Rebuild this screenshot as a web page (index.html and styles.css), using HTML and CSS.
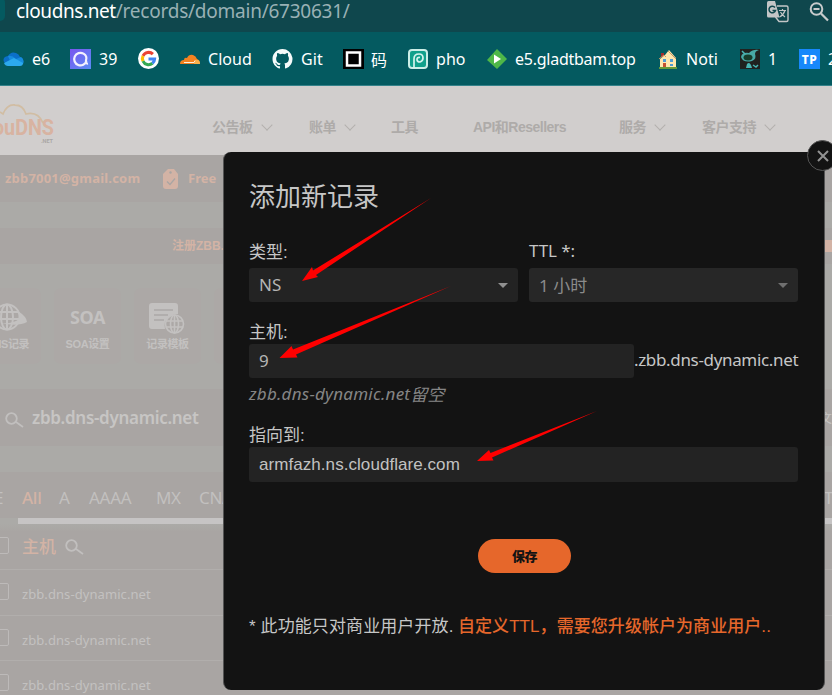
FILE: index.html
```html
<!DOCTYPE html>
<html lang="zh-CN">
<head>
<meta charset="utf-8">
<title>ClouDNS</title>
<link rel="stylesheet" href="styles.css">
</head>
<body>
<div class="screen">
  <div class="address">
    <span class="tab-edge"></span>
    <div class="url"><b>cloudns.net</b>/records/domain/6730631/</div>
    <svg class="translate" width="22" height="22" viewBox="0 0 22 22"><path d="M10 5h9.5q1.500 0 1.500 1.500V19q0 1.500-1.500 1.500H12L8.500 16" fill="none" stroke="#c3c6c7" stroke-width="1.400"/><path d="M1.500 0H8l4.500 16.500H1.500Q0 16.500 0 15V1.500Q0 0 1.500 0z" fill="#c3c6c7"/><path d="M8 6.500A3.300 3.300 0 1 0 8.500 9.500H5.500" fill="none" stroke="#0f474d" stroke-width="1.500"/><path d="M12 9.500h7M15.500 8v1.500M18 9.500Q16.500 14 12.500 16M13.500 11q1.500 3 4.500 5" fill="none" stroke="#c3c6c7" stroke-width="1.200"/></svg>
    <svg class="zoomout" width="22" height="22" viewBox="0 0 22 22"><circle cx="7.500" cy="8" r="5.800" fill="none" stroke="#c7cbcc" stroke-width="2"/><path d="M4.500 8h6M12 12.500l7 7" stroke="#c7cbcc" stroke-width="2.200" fill="none"/></svg>
  </div>
  <div class="bookmarks">
    <div class="bm"><svg width="21" height="20" viewBox="0 0 21 20"><path d="M1 13Q-1 8 5 7Q8 2 13 4Q16 5 17 8Q21 9 20 13L15 16H5z" fill="#0b6fc8"/><path d="M5 7q4-1 8 3l5-2q4 3 2 7L8 14z" fill="#168bdd"/><path d="M1 14l10-5q2 1 9 5 0 3-3 3H5q-3 0-4-3z" fill="#2ca9ee"/></svg>e6</div>
    <div class="bm"><svg width="21" height="20" viewBox="0 0 21 20"><defs><linearGradient id="v" x2="1" y2="1"><stop stop-color="#7a55ef"/><stop offset="1" stop-color="#5a8df5"/></linearGradient></defs><rect width="21" height="20" fill="url(#v)"/><path d="M16.500 12A6.300 6.300 0 1 1 13.500 4.600Q17.500 7 16 11.500q-.5 3.500 2 3" fill="none" stroke="#f3f1ff" stroke-width="2.200"/></svg>39</div>
    <div class="bm"><svg width="21" height="21" viewBox="0 0 48 48"><circle cx="24" cy="24" r="24" fill="#fff"/><g fill="none" stroke-width="7"><path d="M34 14A14 14 0 0 0 11.500 18" stroke="#ea4335"/><path d="M11.500 18A14 14 0 0 0 11.500 30" stroke="#fbbc05"/><path d="M11.500 30A14 14 0 0 0 33 35" stroke="#34a853"/><path d="M33 35A14 14 0 0 0 38 25H24" stroke="#4285f4"/></g></svg></div>
    <div class="bm"><svg width="21" height="20" viewBox="0 0 21 20"><path d="M0 15q0-4 4-4 0-3 3-2 2-4 6-3 3 1 4 4 3 1 3 5z" fill="#f58220"/><path d="M14 15l1-4q5-1 5 4z" fill="#fbb04b"/><path d="M4 13.500h10l1-2" fill="none" stroke="#fff0dc" stroke-width="1"/></svg><span class="shift">Cloud</span></div>
    <div class="bm"><svg width="21" height="20" viewBox="0 0 16 16"><path fill="#f5fafa" d="M8 0C3.580 0 0 3.580 0 8c0 3.540 2.290 6.530 5.470 7.590.4.070.55-.17.55-.38v-1.490c-2.230.49-2.700-.95-2.700-.95-.36-.93-.89-1.180-.89-1.180-.73-.5.050-.49.050-.49.810.060 1.230.83 1.230.83.720 1.230 1.880.87 2.340.67.070-.52.280-.87.510-1.070-1.780-.2-3.640-.89-3.640-3.950 0-.87.310-1.590.82-2.150-.080-.2-.36-1.020.080-2.120 0 0 .67-.21 2.200.82a7.600 7.600 0 0 1 4 0c1.530-1.040 2.200-.82 2.200-.82.440 1.100.160 1.920.080 2.120.510.560.82 1.270.82 2.150 0 3.070-1.870 3.750-3.650 3.950.29.250.54.730.54 1.480v2.190c0 .21.150.46.550.38A8 8 0 0 0 8 0z"/></svg>Git</div>
    <div class="bm"><svg width="21" height="20" viewBox="0 0 21 20"><rect width="21" height="20"/><rect x="4" y="3.500" width="13" height="13" stroke="#fff" stroke-width="2.500"/></svg><span class="shift">码</span></div>
    <div class="bm"><svg width="21" height="20" viewBox="0 0 21 20"><rect x="1" y="1" width="18" height="18" rx="3" fill="#11a08b" stroke="#cbeee7" stroke-width="2"/><path d="M6 19V10Q6 5 11 5q4 0 4 4 0 3-3 4-3 0-3-2.500Q9 8 12 8.500" fill="none" stroke="#d5f3ed" stroke-width="1.700"/></svg><span class="shift">pho</span></div>
    <div class="bm"><svg width="21" height="20" viewBox="0 0 21 20"><path d="M10 0l10 10-10 10L0 11z" fill="#4eb748"/><path d="M7 5.500l7 4.500-7 4.500z" fill="#fff"/></svg><span class="tight">e5.gladtbam.top</span></div>
    <div class="bm"><svg width="20" height="20" viewBox="0 0 20 20"><path d="M3 4h3v4H3z" fill="#a62b2b"/><path d="M2 10l5-4 4-5 7 8v10H2z" fill="#ffe7ae"/><path d="M1 10l5-4 2 2M10 2l8 8" fill="none" stroke="#c89866"/><path d="M5 10h3v3H5zM12 10h3v3h-3zM12 15h3v2h-3z" fill="#509bd2"/><path d="M5 14h3v5H5z" fill="#c35131"/><path d="M1 19h18" stroke="#65993a" stroke-width="2"/></svg>Noti</div>
    <div class="bm"><svg width="20" height="20" viewBox="0 0 20 20"><rect width="20" height="20" fill="#20221f"/><path d="M1 8Q2 3 9 4q4-4 10-3-4 1-4 4 2 5-3 7-9 2-11-4z" fill="#48a9a6"/><ellipse cx="8" cy="8.500" rx="4.500" ry="3" fill="#173d2b"/><path d="M7 15q3-3 5 4H6z" fill="#48b5b3"/><path d="M2 2l3 3M13 16l3 2 2-2" fill="none" stroke="#48b5b3" stroke-width="1.500"/></svg>1</div>
    <div class="bm"><span class="tp">TP</span>2</div>
  </div>
  <div class="site-head">
    <svg class="logo" width="58" height="44" viewBox="0 0 58 44"><path d="M0 9l3 2Q7 1 15 2q8 0 11 9 12-3 17 9" fill="none" stroke="#d1bda3" stroke-width="1.800"/><text class="logo-name" x="-7" y="32" textLength="61" lengthAdjust="spacingAndGlyphs">ouDNS</text><text class="logo-net" x="41" y="39.500" textLength="12" lengthAdjust="spacingAndGlyphs">.NET</text></svg>
    <div class="nav">
      <span>公告板<i class="chev"></i></span><span>账单<i class="chev"></i></span><span>工具</span><span>API和Resellers</span><span>服务<i class="chev"></i></span><span>客户支持<i class="chev"></i></span>
    </div>
  </div>
  <div class="account">
    <span class="mail">zbb7001@gmail.com</span>
    <svg width="16" height="20" viewBox="0 0 16 20"><path d="M5 0h6l4 5v12q0 3-3 3H3q-3 0-3-3V5z" fill="#d3b3a5"/><circle cx="7.500" cy="3.500" r="1.200" fill="#a9a5a3"/><path d="M4 12.500l3 3 5-6" fill="none" stroke="#a9a5a3" stroke-width="1.300"/></svg>
    <span class="plan">Free</span>
  </div>
  <div class="register"><span>注册ZBB.</span><i></i></div>
  <div class="tiles">
    <div class="tile"><svg width="44" height="32" viewBox="0 0 44 32"><g fill="none" stroke="#c3c1c0" stroke-width="2"><circle cx="21" cy="15" r="12.500"/><ellipse cx="21" cy="15" rx="6" ry="12.500"/><path d="M21 2v26M9 10h24M8 17h26"/></g><path d="M32 9q9 6 9 11-9 5-27 1 14 1 19-4 1-3-1-8z" fill="#c3c1c0"/></svg><span>DNS记录</span></div>
    <div class="tile"><div class="soa">SOA</div><span>SOA设置</span></div>
    <div class="tile"><svg width="36" height="32" viewBox="0 0 36 32"><path d="M3 1h23q3 0 3 3v8q-9 0-13 8-1 3 0 7H3q-3 0-3-3V4q0-3 3-3z" fill="#c3c1c0"/><path d="M5 8h19M5 13h14M5 18h10" stroke="#aca8a6" stroke-width="1.700"/><g fill="none" stroke="#c3c1c0" stroke-width="1.600"><circle cx="25.500" cy="22" r="9"/><ellipse cx="25.500" cy="22" rx="4" ry="9"/><path d="M25.500 13v18M17 19h17M17 25h17"/></g></svg><span>记录模板</span></div>
    <div class="tile"></div>
  </div>
  <div class="zone"><svg class="mag" width="19" height="16" viewBox="0 0 19 16"><circle cx="6.500" cy="6.500" r="5.300"/><path d="M11 10l7 5"/></svg><span>zbb.dns-dynamic.net</span><em>文</em></div>
  <div class="types"><span>E</span><span class="on">All</span><span>A</span><span>AAAA</span><span>MX</span><span>CNAME</span><span class="far">TL</span></div>
  <div class="slider"></div>
  <div class="list">
    <div class="line head"><i class="box"></i><b>主机</b><svg class="mag" width="19" height="16" viewBox="0 0 19 16"><circle cx="6.500" cy="6.500" r="5.300"/><path d="M11 10l7 5"/></svg></div>
    <div class="line"><i class="box"></i><span>zbb.dns-dynamic.net</span></div>
    <div class="line third"><i class="box"></i><span>zbb.dns-dynamic.net</span></div>
    <div class="line"><i class="box"></i><span>zbb.dns-dynamic.net</span></div>
  </div>

  <div class="modal">
    <h1>添加新记录</h1>
    <div class="pair">
      <div><label>类型:</label><div class="field"><span>NS</span><i class="caret"></i></div></div>
      <div><label class="lat">TTL *:</label><div class="field dim"><span>1 小时</span><i class="caret"></i></div></div>
    </div>
    <label class="host">主机:</label>
    <div class="host-row"><div class="field"><span>9</span></div><span class="suffix">.zbb.dns-dynamic.net</span></div>
    <div class="hint"><span>zbb.dns-dynamic.net</span>留空</div>
    <label class="point">指向到:</label>
    <div class="field target">armfazh.ns.cloudflare.com</div>
    <div class="save">保存</div>
    <div class="note"><span class="n1">* 此功能只对商业用户开放.</span><b>自定义TTL，需要您升级帐户为商业用户..</b></div>
  </div>
  <div class="close"><svg width="12" height="12" viewBox="0 0 12 12"><path d="M1 1l10 10M11 1L1 11" stroke="#929292" stroke-width="2"/></svg></div>
  <svg class="arrows" width="832" height="695" viewBox="0 0 832 695"><g fill="#f00"><path d="M302 281l10-14 1 3.500L431 198 316 275l2 2z"/><path d="M279.500 358l12-12 1.500 3.500L451 286 296 354.500l1.500 3z"/><path d="M477 461l12-11 1.500 3L597 411 492 457.500l1.500 3z"/></g></svg>
</div>
</body>
</html>
```
FILE: styles.css
```css
* { box-sizing: border-box; }
body { margin: 0; }
i, em { font-style: normal; }
.screen { position: relative; width: 832px; height: 695px; overflow: hidden; background: #abaaa7; font-family: "Noto Sans", "Noto Sans CJK SC", sans-serif; white-space: nowrap; display: flex; flex-direction: column; }
.screen > * { flex-shrink: 0; }
.address { height: 32px; background: #0f474d; display: flex; overflow: hidden; color: #99b1b5; }
.tab-edge { width: 5px; height: 22px; border-radius: 0 8px 12px 0; background: #045a60; margin-top: -1px; }
.url { width: 762px; padding-left: 11px; font-size: 19px; line-height: 22px; letter-spacing: -.24px; }
.url b { font-weight: 400; color: #fff; letter-spacing: -.4px; }
.translate { margin-top: 1px; }
.zoomout { margin-left: 20px; margin-top: 1px; }
.bookmarks { height: 54px; background: #045a60; border-bottom: 1px solid #34828a; padding-left: 3px; display: grid; grid-template-columns: 67px 68px 42px 92px 71px 65px 79px 171px 82px 59px 50px; color: #fff; font-size: 16px; }
.bm { display: flex; align-items: center; gap: 8px; letter-spacing: .05px; }
.bm > svg, .tp { flex: none; }
.shift { margin-left: -1px; }
.tight { letter-spacing: -.25px; margin-left: -1px; }
.tp { width: 21px; height: 20px; background: #1788fb; font-weight: 800; font-size: 12px; line-height: 21px; text-align: center; letter-spacing: .5px; }
.site-head { height: 69px; background: #d1cecd; display: flex; }
.logo { margin-top: 17px; }
.logo-name { font: 700 22px Roboto, sans-serif; fill: #d8b3a1; }
.logo-net { font: 700 6px Roboto, sans-serif; fill: #aaa7a5; }
.nav { padding: 31px 0 0 154px; display: grid; align-items: start; grid-template-columns: 97px 82px 82px 146px 83px 120px; font: 700 14px/20px "Liberation Sans", "Noto Sans CJK SC", sans-serif; letter-spacing: -.5px; color: #aeaba9; }
.nav span { display: flex; align-items: center; height: 20px; }
.chev { width: 8px; height: 8px; border: solid #b3b0ae; border-width: 0 1.5px 1.5px 0; transform: rotate(45deg); margin: -5px 0 0 10px; }
.account { height: 47px; background: #a9a5a3; color: #d3b3a5; display: flex; align-items: center; font-weight: 700; font-size: 13px; padding-left: 5px; }
.mail { width: 158px; letter-spacing: .2px; }
.mail, .plan { margin-top: -2px; }
.plan { margin-left: 9px; }
.register { margin-top: 26px; height: 36px; background: #a9a5a3; color: #d3b3a5; font: 700 12px/36px "Liberation Sans", "Noto Sans CJK SC", sans-serif; padding-left: 172px; display: flex; justify-content: space-between; align-items: center; }
.register i { width: 7px; height: 12px; background: #d3b3a5; }
.tiles { margin: 24px 0 0 -26px; height: 76px; display: grid; grid-template-columns: repeat(4, 67px); gap: 13px; }
.tile { background: #aca8a6; border-radius: 7px; display: flex; flex-direction: column; align-items: center; padding-top: 14px; color: #c3c1c0; font: 700 11px/18px "Liberation Sans", "Noto Sans CJK SC", sans-serif; letter-spacing: -.4px; }
.tile svg, .soa { height: 32px; margin-bottom: 1px; flex: none; }
.soa { font: 700 18px/31px "Noto Sans", sans-serif; }
.tile:nth-child(3) svg { margin-left: -2px; }
.zone { margin-top: 25px; height: 57px; background: #a9a5a3; display: flex; align-items: center; padding-left: 5px; color: #c7c5c4; font-weight: 600; font-size: 17px; }
.zone span { margin: -1px 0 0 8px; width: 792px; letter-spacing: -.3px; }
.zone em { font-size: 12px; font-weight: 400; }
.mag { fill: none; stroke: #c1bfbe; stroke-width: 1.8px; flex: none; }
.zone .mag { margin-top: 4px; }
.types { margin-top: 26px; height: 46px; background: #a9a5a3; color: #c2c0bf; display: grid; grid-template-columns: 28px 37px 30px 67px 43px 625px 30px; margin-left: -6px; font-size: 17px; line-height: 51px; letter-spacing: -.3px; }
.types .on { color: #d3b3a5; font-weight: 500; }
.slider { height: 6px; background: #c6c4c4; margin-left: 18px; }
.list { flex: 1; background: linear-gradient(#abaaa7, #a9a5a3 8px); }
.line { height: 46px; border-bottom: 1px solid #b1aeac; display: flex; align-items: center; color: #c3c1c0; font-size: 13px; }
.line.third { height: 45px; }
.line span { margin: 3px 0 0 13px; letter-spacing: .08px; }
.box { width: 17px; height: 17px; margin: -2px 0 0 -8px; border: 1px solid #bdbab9; border-radius: 2px; }
.line b { margin: -2px 9px 0 13px; font: 500 17px/24px "Noto Sans CJK SC", sans-serif; color: #d3b3a5; }
.modal { position: absolute; left: 223px; top: 152px; width: 602px; height: 538px; background: #131313; border: solid #555; border-width: 0 1px; border-radius: 8px; padding: 23px 26px 0 25px; color: #c6c6c6; font-size: 17px; }
h1 { margin: 0; font: 400 26px/40px "Noto Sans CJK SC", sans-serif; }
label { display: block; font: 400 17px/24px "Liberation Sans", "Noto Sans CJK SC", sans-serif; }
label.lat { font-family: "Noto Sans", sans-serif; letter-spacing: -.1px; line-height: 20px; padding-bottom: 4px; }
.pair { display: flex; gap: 11px; margin-top: 26px; }
.pair > div { width: 269px; }
.pair .field { margin-top: 3px; }
.field { height: 34px; background: #232323; border-radius: 3px; padding: 0 10px; display: flex; align-items: center; justify-content: space-between; color: #b5b5b5; }
.field > span { margin-top: -2px; }
.field.dim { background: #272727; color: #8b8b8b; font-family: "Noto Sans", "Noto Sans CJK SC", sans-serif; }
.caret { border: solid transparent; border-width: 5px 5px 0; border-top-color: #909090; }
.dim .caret { border-top-color: #707070; }
.host { margin-top: 19px; }
.host-row { display: flex; align-items: center; margin-top: -1px; }
.host-row .field { width: 385px; flex: none; }
.suffix { letter-spacing: -.34px; font-size: 17px; margin-top: -3px; }
.hint { font: italic 400 17px/24px "Noto Sans CJK SC", sans-serif; color: #858585; margin-top: 4px; display: flex; }
.hint span { font-family: "Noto Sans", sans-serif; letter-spacing: .25px; }
.point { margin-top: 18px; }
.target { font: 400 17px "Liberation Sans", sans-serif; height: 35px; color: #c1c1c1; margin-top: -1px; letter-spacing: .06px; }
.save { width: 93px; height: 34px; border-radius: 17px; background: #e6672b; margin: 57px 0 0 229px; text-align: center; color: #131313; font: 900 13px/34px "Noto Sans CJK SC", sans-serif; letter-spacing: -.5px; }
.note { display: flex; margin-top: 41px; font: 400 17px/26px "Liberation Sans", "Noto Sans CJK SC", sans-serif; }
.n1 { width: 209px; letter-spacing: .1px; }
.note b { color: #e6672b; font-weight: 500; letter-spacing: .06px; }
.close { position: absolute; left: 807px; top: 140px; width: 31px; height: 31px; border-radius: 50%; background: #131313; border: 1px solid #555; display: flex; align-items: center; justify-content: center; }
.arrows { position: absolute; left: 0; top: 0; }
```
